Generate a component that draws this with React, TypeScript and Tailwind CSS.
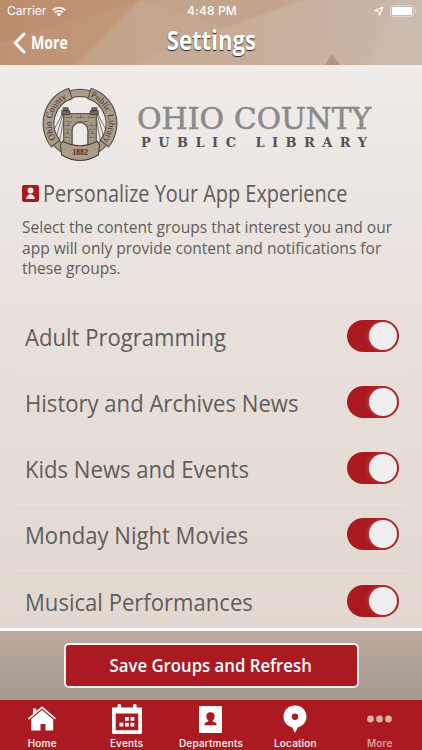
import { useState } from "react";

type IconProps = {
    className?: string
}

const groups: string[] = [
    "Adult Programming",
    "History and Archives News",
    "Kids News and Events",
    "Monday Night Movies",
    "Musical Performances",
]

const WifiIcon = () => (
    <svg className="h-[11px] w-[14px]" viewBox="0 0 14 11" fill="none" stroke="#fff" strokeWidth="1.9">
        <path d="M.8 4.1a8.9 8.9 0 0 1 12.4 0" />
        <path d="M3 6.5a5.7 5.7 0 0 1 8 0" />
        <path d="M7 10.6 4.7 8.2a3.3 3.3 0 0 1 4.6 0z" fill="#fff" stroke="none" />
    </svg>
)

const HomeIcon = () => (
    <svg className="h-[30px] w-[30px]" viewBox="0 0 30 30" fill="#fff">
        <path d="M6 4.5h3.4v3L6 10.8z" />
        <path d="M15 2.3 29 14.3l-1 1.1L15 4.4 2 15.4l-1-1.1z" />
        <path d="M15 5.9 26.2 15.4V26.5h-7.7V20h-5v6.5H4.3V15z" />
    </svg>
)

const CalendarIcon = () => (
    <svg className="h-[30px] w-[30px]" viewBox="0 0 30 30" fill="#fff">
        <path fillRule="evenodd" d="M0 3.500h30v25a1.500 1.500 0 0 1-1.500 1.500h-27A1.500 1.500 0 0 1 0 28.500zM3.700 9.500V26.300h22.600V9.500z" />
        <rect x="5.500" width="3.600" height="6" rx="1.500" />
        <rect x="21" width="3.600" height="6" rx="1.500" />
        <path d="M13 13h3.800v3.800H13zM18.500 13h3.800v3.800h-3.800zM7.500 18.700h3.800v3.800H7.500zM13 18.700h3.800v3.800H13zM18.500 18.700h3.800v3.800h-3.800z" />
    </svg>
)

const ContactIcon = ({ className }: IconProps) => (
    <svg className={className} viewBox="0 0 24 28" fill="currentColor">
        <path fillRule="evenodd" d="M1 0h22a1 1 0 0 1 1 1v26a1 1 0 0 1-1 1H1a1 1 0 0 1-1-1V1a1 1 0 0 1 1-1zM12 6.500c-2.900 0-4.300 1.600-4.300 4 0 1.900.8 3.500 2 4.300v1.400c-2.400.7-4.200 1.500-4.200 3.800h13c0-2.300-1.800-3.100-4.200-3.800v-1.400c1.200-.8 2-2.400 2-4.300 0-2.400-1.400-4-4.300-4z" />
    </svg>
)

const PinIcon = () => (
    <svg className="h-[28px] w-[24px]" viewBox="0 0 24 28" fill="#fff">
        <path fillRule="evenodd" d="M12 .5c6.400 0 11.500 4.800 11.500 11 0 5.500-3.500 9.300-8.600 10.800L12 28l-2.900-5.700C4 20.800.5 17 .5 11.500.5 5.300 5.600.5 12 .5zm0 8a3.200 3.200 0 1 0 0 6.400 3.200 3.200 0 0 0 0-6.400z" />
    </svg>
)

const Seal = () => (
    <svg className="h-[77px] w-[76px]" viewBox="0 0 77 78">
        <defs>
            <path id="sealLeft" d="M16.400 57.700A29 29 0 0 1 30.200 11.200" />
            <path id="sealRight" d="M45 10.700A29 29 0 0 1 60.600 57.700" />
        </defs>
        <circle cx="38.500" cy="39" r="31" fill="none" stroke="#49423a" strokeWidth="8.500" />
        <circle cx="38.500" cy="39" r="31" fill="none" stroke="#ab9d8b" strokeWidth="6.500" />
        <g stroke="#49423a" strokeWidth=".7" fill="none">
            <path d="m22 27-12 22M22 27 14 54M23 28l-5 28M55 27l12 22M55 27l8 27M54 28l5 28" />
        </g>
        <path d="M22 29h33v32H22z" fill="#a69885" stroke="#49423a" strokeWidth="1" />
        <path d="M20 26h8v4h-8zM49 26h8v4h-8zM21.500 23h5v3h-5zM50.500 23h5v3h-5z" fill="#756a5d" stroke="#3d3832" strokeWidth=".8" />
        <path d="M23 33h8m3 0h9m3 0h8M24 37h6m5 0h12M23 41h6m18 0h7M24 45h4m20 0h6M23 49h5m20 0h6M23 53h5m20 0h6M30 30v3m9-3v4m9-3v3M27 38v3m23-3v4M26 46v3m25-3v4" stroke="#6d6357" strokeWidth=".8" />
        <path d="M30.500 63V46a8 8 0 0 1 16 0v17z" fill="#eeeae7" stroke="#49423a" strokeWidth="1.200" />
        <g fill="none" strokeWidth="12">
            <path d="M29.300 8.400A32 32 0 0 0 14.100 59.600M47.700 8.400A32 32 0 0 1 62.900 59.600" stroke="#49423a" />
            <path d="M28.400 8.700A32 32 0 0 0 13.500 58.900M48.600 8.700A32 32 0 0 1 63.500 58.900" stroke="#ab9d8b" strokeWidth="10" />
        </g>
        <path d="m18.500 61 2.500-4q17.500 9 35 0l2.500 4L57 71q-18.500 11-37 0z" fill="#ab9d8b" stroke="#49423a" strokeWidth="1.100" strokeLinejoin="round" />
        <g fill="#35312c" fontFamily="'Liberation Serif', serif" fontSize="9.200">
            <text><textPath href="#sealLeft" startOffset="4">Ohio County</textPath></text>
            <text><textPath href="#sealRight" startOffset="4">Public Library</textPath></text>
            <text x="38.500" y="71" fontSize="8" textAnchor="middle" fontWeight="bold">1882</text>
        </g>
    </svg>
)

const Wordmark = () => (
    <svg className="h-[50px] w-[236px]" viewBox="0 0 236 50" fontFamily="'DejaVu Serif', serif">
        <g fill="#8b8a89" stroke="#8b8a89" strokeWidth=".6" fontSize="29">
            <text x="-1" y="27.500" textLength="87" lengthAdjust="spacingAndGlyphs">OHIO</text>
            <text x="96" y="27.500" textLength="137" lengthAdjust="spacingAndGlyphs">COUNTY</text>
        </g>
        <text x="3" y="46" fill="#54514f" fontWeight="bold" fontSize="13" textLength="226">PUBLIC LIBRARY</text>
    </svg>
)

const Backdrop = () => (
    <svg className="absolute inset-0 h-full w-full" viewBox="0 0 422 65" preserveAspectRatio="none">
        <defs>
            <linearGradient id="sky" x1="0" x2="1">
                <stop offset="0" stopColor="#bf9273" />
                <stop offset=".4" stopColor="#c4a58e" />
                <stop offset="1" stopColor="#c9b8aa" />
            </linearGradient>
        </defs>
        <path d="M0 0h422v65H0z" fill="url(#sky)" />
        <path d="M0 0h140L0 43z" fill="#b98766" opacity=".5" />
        <path d="M140 0 76 65H0V43z" fill="#c09373" opacity=".6" />
        <path d="M140 0h165L128 65H76z" fill="#c4a78f" opacity=".6" />
        <path d="M140 0h165l-75 28z" fill="#c09f87" opacity=".5" />
        <path d="M320 0 270 65H128l170-65z" fill="#cbb4a1" opacity=".4" />
        <path d="m295 25 90 40H265z" fill="#ceb4a0" opacity=".4" />
        <path d="M422 0h-25l-30 65h55z" fill="#c9beb4" opacity=".6" />
        <path d="m332 54 8 11h-15z" fill="#b2957f" />
    </svg>
)

const Toggle = ({ on, onClick }: { on: boolean, onClick: () => void }) => (
    <button
        role="switch"
        aria-checked={on}
        onClick={onClick}
        className={`flex h-[32px] w-[52px] items-center rounded-full p-[2px] ${on ? "justify-end bg-[#ab1920]" : "justify-start bg-[#b9aea6]"}`}
    >
        <span className="size-[28px] rounded-full bg-[#efeeee] shadow-[-1px_0_4px_rgba(255,255,255,0.2)]"></span>
    </button>
)

const App = () => {
    const [selected, setSelected] = useState<boolean[]>([true, true, true, true, true])

    const handleToggle = (index: number) => {
        setSelected((prev) => prev.map((item, i) => (i === index ? !item : item)))
    }

    return (
        <div className="flex h-[750px] w-[422px] flex-col overflow-hidden font-['Open_Sans',sans-serif] text-[#605d5b]">
            <header className="relative h-[65px] shrink-0">
                <Backdrop />
                <div className="relative flex h-[22px] items-center justify-between pr-[5px] pl-[7px] text-[12px] text-white">
                    <div className="flex w-[100px] items-center gap-[6px] font-[Inter,sans-serif]">
                        <span>Carrier</span>
                        <WifiIcon />
                    </div>
                    <span className="font-[Inter,sans-serif] font-medium tracking-[0.15px]">4:48 PM</span>
                    <div className="flex w-[100px] items-center justify-end gap-[6px]">
                        <svg className="size-[10px]" viewBox="0 0 10 10" fill="none" stroke="#fff" strokeWidth="1.1" strokeLinejoin="round">
                            <path d="M9 1 .8 4.700l4 .6.6 4z" />
                        </svg>
                        <svg className="h-[12px] w-[27px]" viewBox="0 0 27 12">
                            <rect x=".5" y=".5" width="23" height="11" rx="2.500" fill="none" stroke="#eadfd6" opacity=".7" />
                            <rect x="2" y="2" width="20" height="8" rx="1" fill="#fff" />
                            <path d="M25 4v4q1.500-.5 1.500-2T25 4z" fill="#eadfd6" opacity=".7" />
                        </svg>
                    </div>
                </div>
                <div className="relative grid h-[43px] grid-cols-3 text-white">
                    <div className="flex items-start gap-[5px] pt-[10px] pl-[13px]">
                        <svg className="h-[22px] w-[13px]" viewBox="0 0 13 22" fill="none" stroke="#fff" strokeWidth="3" strokeLinecap="round">
                            <path d="M11 2 2.200 11 11 20" />
                        </svg>
                        <span className="origin-left scale-x-[0.83] text-[17px] leading-[22px] font-bold">More</span>
                    </div>
                    <h1 className="scale-x-[0.85] pt-[2px] text-center text-[26px] leading-[32px] font-bold [text-shadow:0_1px_1px_#222]">Settings</h1>
                </div>
            </header>

            <main className="flex h-[563px] shrink-0 flex-col bg-linear-to-b from-[#efecea] via-[#e8e0db] via-45% to-[#e2d8d0]">
                <div className="flex h-[97px] items-start gap-[20px] pt-[20px] pl-[42px]">
                    <Seal />
                    <div className="pt-[16px]"><Wordmark /></div>
                </div>
                <section className="px-[22px] pt-[16px]">
                    <h2 className="flex items-center gap-[4px] text-[23px] leading-[30px] whitespace-nowrap">
                        <svg className="h-[17px] w-[17px]" viewBox="0 0 17 17">
                            <rect width="17" height="17" rx="2" fill="#ab1920" />
                            <circle cx="8.500" cy="5.500" r="3" fill="#f2e8e5" />
                            <path d="M4 14q.5-4 4.500-5 4 1 4.500 5z" fill="#f2e8e5" />
                        </svg>
                        <span className="origin-left scale-x-[0.865]">Personalize Your App Experience</span>
                    </h2>
                    <p className="origin-left scale-x-[0.972] pt-[9px] text-[16px] leading-[20.500px] whitespace-nowrap">
                        Select the content groups that interest you and our<br />
                        app will only provide content and notifications for<br />
                        these groups.
                    </p>
                </section>
                <ul className="mx-[16px] pt-[28px]">
                    {groups.map((group, index) => {
                        return (
                            <li key={group} className="flex h-[66px] items-center justify-between border-b border-[#eae1db] pr-[7px] pb-[6px] pl-[9px] last:border-0">
                                <span className="origin-left scale-x-[0.92] pt-[2px] text-[24px] whitespace-nowrap">{group}</span>
                                <Toggle on={selected[index]} onClick={() => handleToggle(index)} />
                            </li>
                        )
                    })}
                </ul>
            </main>

            <div className="flex h-[72px] shrink-0 justify-center border-t-[3px] border-white bg-linear-to-b from-[#baaa9f] to-[#a69b91] pt-[12px]">
                <button className="h-[45px] w-[295px] rounded-[5px] border-2 border-[#f7efed] bg-[#ab1a21] text-[18px] font-semibold text-white">
                    <span className="inline-block scale-x-[0.93]">Save Groups and Refresh</span>
                </button>
            </div>

            <nav className="grid grow grid-cols-5 bg-[#ab1a21] font-[Inter,sans-serif] text-[10px] font-medium tracking-[0.2px] text-white">
                {[
                    { label: "Home", icon: <HomeIcon /> },
                    { label: "Events", icon: <CalendarIcon /> },
                    { label: "Departments", icon: <ContactIcon className="h-[27px] w-[23px]" /> },
                    { label: "Location", icon: <PinIcon /> },
                    { label: "More", icon: <svg className="h-[8px] w-[25px]" viewBox="0 0 25 8" fill="#dbb3a4"><circle cx="3.500" cy="4" r="3.400" /><circle cx="12.500" cy="4" r="3.400" /><circle cx="21.500" cy="4" r="3.400" /></svg> },
                ].map((tab) => (
                    <a key={tab.label} className="flex flex-col items-center last:text-[#dbb3a4]">
                        <span className="flex h-[36px] items-center pt-[2px]">{tab.icon}</span>
                        <span className="leading-[14px]">{tab.label}</span>
                    </a>
                ))}
            </nav>
        </div>
    );
};

export default App;
